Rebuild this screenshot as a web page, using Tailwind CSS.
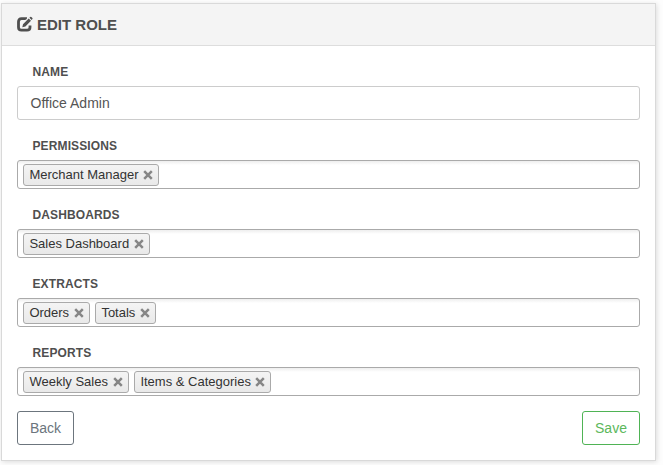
<!DOCTYPE html>
<html lang="en">
<head>
<meta charset="utf-8">
<title>Edit Role</title>
<script src="https://cdn.jsdelivr.net/npm/@tailwindcss/browser@4"></script>
</head>
<body class="h-[465px] overflow-hidden bg-[#fdfdfd] pl-px pt-[3px] font-['Liberation_Sans',Arial,sans-serif] text-[#4f4f4f]">
<svg class="hidden"><symbol id="x" viewBox="0 0 10 10"><path d="M1.2 1.2 8.8 8.8M8.8 1.2 1.2 8.8" stroke="#868686" stroke-width="2.5" fill="none"/></symbol></svg>
<main class="h-[458px] w-[655px] border border-[#d9d9d9] bg-white shadow-[1px_1px_5px_rgba(0,0,0,0.13)]">
  <header class="flex h-[42px] items-center border-b border-[#dddddd] bg-[#f4f4f4] pl-[15px]">
    <svg class="mr-[4px] mb-[2px] h-[16px] w-[16px]" viewBox="0 0 16 16"><path d="M10 2.7H4.5Q1.5 2.7 1.5 5.7V11.2Q1.5 14.2 4.5 14.2H10Q13 14.2 13 11.2V9.4" fill="none" stroke="#4f4f4f" stroke-width="2.8"/><path d="M5.3 11.3 6 8.2 11.7 2.5 14 4.8 8.4 10.5Z M12.4 1.8 13.3.9Q13.8.5 14.3 1L15.4 2.1Q15.8 2.6 15.4 3.1L14.7 4Z" fill="#4f4f4f"/><path d="M5 7.8 10.5 2.3" stroke="#f4f4f4" stroke-width="1"/></svg>
    <h1 class="text-[15px] leading-5 font-bold">EDIT ROLE</h1>
  </header>
  <form class="px-[15px] pt-[17px]">
    <section>
      <label class="block h-[23px] pl-[15.5px] text-[12px] leading-[18px] font-bold tracking-[0.12px]">NAME</label>
      <div class="flex h-[34px] w-[623px] items-center rounded-[3px] border border-[#cccccc] px-[12.6px] text-[14px] text-[#555]">Office Admin</div>
    </section>
    <section class="mt-[17px]">
      <label class="block h-[23px] pl-[15.5px] text-[12px] leading-[18px] font-bold tracking-[0.12px]">PERMISSIONS</label>
      <div class="flex h-[29px] w-[623px] items-start gap-[5px] rounded-[3px] border border-[#aaa] bg-linear-to-b from-[#eeeeee] to-white to-[4px] pt-[3px] pl-[5px] text-[13px] text-[#333]">
        <span class="flex h-[22px] w-[136px] items-center justify-between rounded-[3px] border border-[#aaa] bg-linear-to-b from-[#f4f4f4] to-[#e9e9e9] pr-[5px] pl-[5.4px] whitespace-nowrap">Merchant Manager<svg class="h-[10px] w-[10px]"><use href="#x"/></svg></span>
      </div>
    </section>
    <section class="mt-[17px]">
      <label class="block h-[23px] pl-[15.5px] text-[12px] leading-[18px] font-bold tracking-[0.12px]">DASHBOARDS</label>
      <div class="flex h-[29px] w-[623px] items-start gap-[5px] rounded-[3px] border border-[#aaa] bg-linear-to-b from-[#eeeeee] to-white to-[4px] pt-[3px] pl-[5px] text-[13px] text-[#333]">
        <span class="flex h-[22px] w-[127px] items-center justify-between rounded-[3px] border border-[#aaa] bg-linear-to-b from-[#f4f4f4] to-[#e9e9e9] pr-[5px] pl-[5.4px] whitespace-nowrap">Sales Dashboard<svg class="h-[10px] w-[10px]"><use href="#x"/></svg></span>
      </div>
    </section>
    <section class="mt-[17px]">
      <label class="block h-[23px] pl-[15.5px] text-[12px] leading-[18px] font-bold tracking-[0.12px]">EXTRACTS</label>
      <div class="flex h-[29px] w-[623px] items-start gap-[5px] rounded-[3px] border border-[#aaa] bg-linear-to-b from-[#eeeeee] to-white to-[4px] pt-[3px] pl-[5px] text-[13px] text-[#333]">
        <span class="flex h-[22px] w-[67px] items-center justify-between rounded-[3px] border border-[#aaa] bg-linear-to-b from-[#f4f4f4] to-[#e9e9e9] pr-[5px] pl-[5.4px] whitespace-nowrap">Orders<svg class="h-[10px] w-[10px]"><use href="#x"/></svg></span>
        <span class="flex h-[22px] w-[61px] items-center justify-between rounded-[3px] border border-[#aaa] bg-linear-to-b from-[#f4f4f4] to-[#e9e9e9] pr-[5px] pl-[5.4px] whitespace-nowrap">Totals<svg class="h-[10px] w-[10px]"><use href="#x"/></svg></span>
      </div>
    </section>
    <section class="mt-[17px]">
      <label class="block h-[23px] pl-[15.5px] text-[12px] leading-[18px] font-bold tracking-[0.12px]">REPORTS</label>
      <div class="flex h-[29px] w-[623px] items-start gap-[5px] rounded-[3px] border border-[#aaa] bg-linear-to-b from-[#eeeeee] to-white to-[4px] pt-[3px] pl-[5px] text-[13px] text-[#333]">
        <span class="flex h-[22px] w-[106px] items-center justify-between rounded-[3px] border border-[#aaa] bg-linear-to-b from-[#f4f4f4] to-[#e9e9e9] pr-[5px] pl-[5.4px] whitespace-nowrap">Weekly Sales<svg class="h-[10px] w-[10px]"><use href="#x"/></svg></span>
        <span class="flex h-[22px] w-[137px] items-center justify-between rounded-[3px] border border-[#aaa] bg-linear-to-b from-[#f4f4f4] to-[#e9e9e9] pr-[5px] pl-[5.4px] whitespace-nowrap">Items &amp; Categories<svg class="h-[10px] w-[10px]"><use href="#x"/></svg></span>
      </div>
    </section>
    <div class="mt-[15px] flex w-[623px] justify-between text-[14px]">
      <button type="button" class="h-[34px] w-[57px] rounded-[3px] border border-[#6c757d] text-[#6c757d]">Back</button>
      <button type="button" class="h-[34px] w-[58px] rounded-[3px] border border-[#4fb355] text-[#5cb85c]">Save</button>
    </div>
  </form>
</main>
</body>
</html>
